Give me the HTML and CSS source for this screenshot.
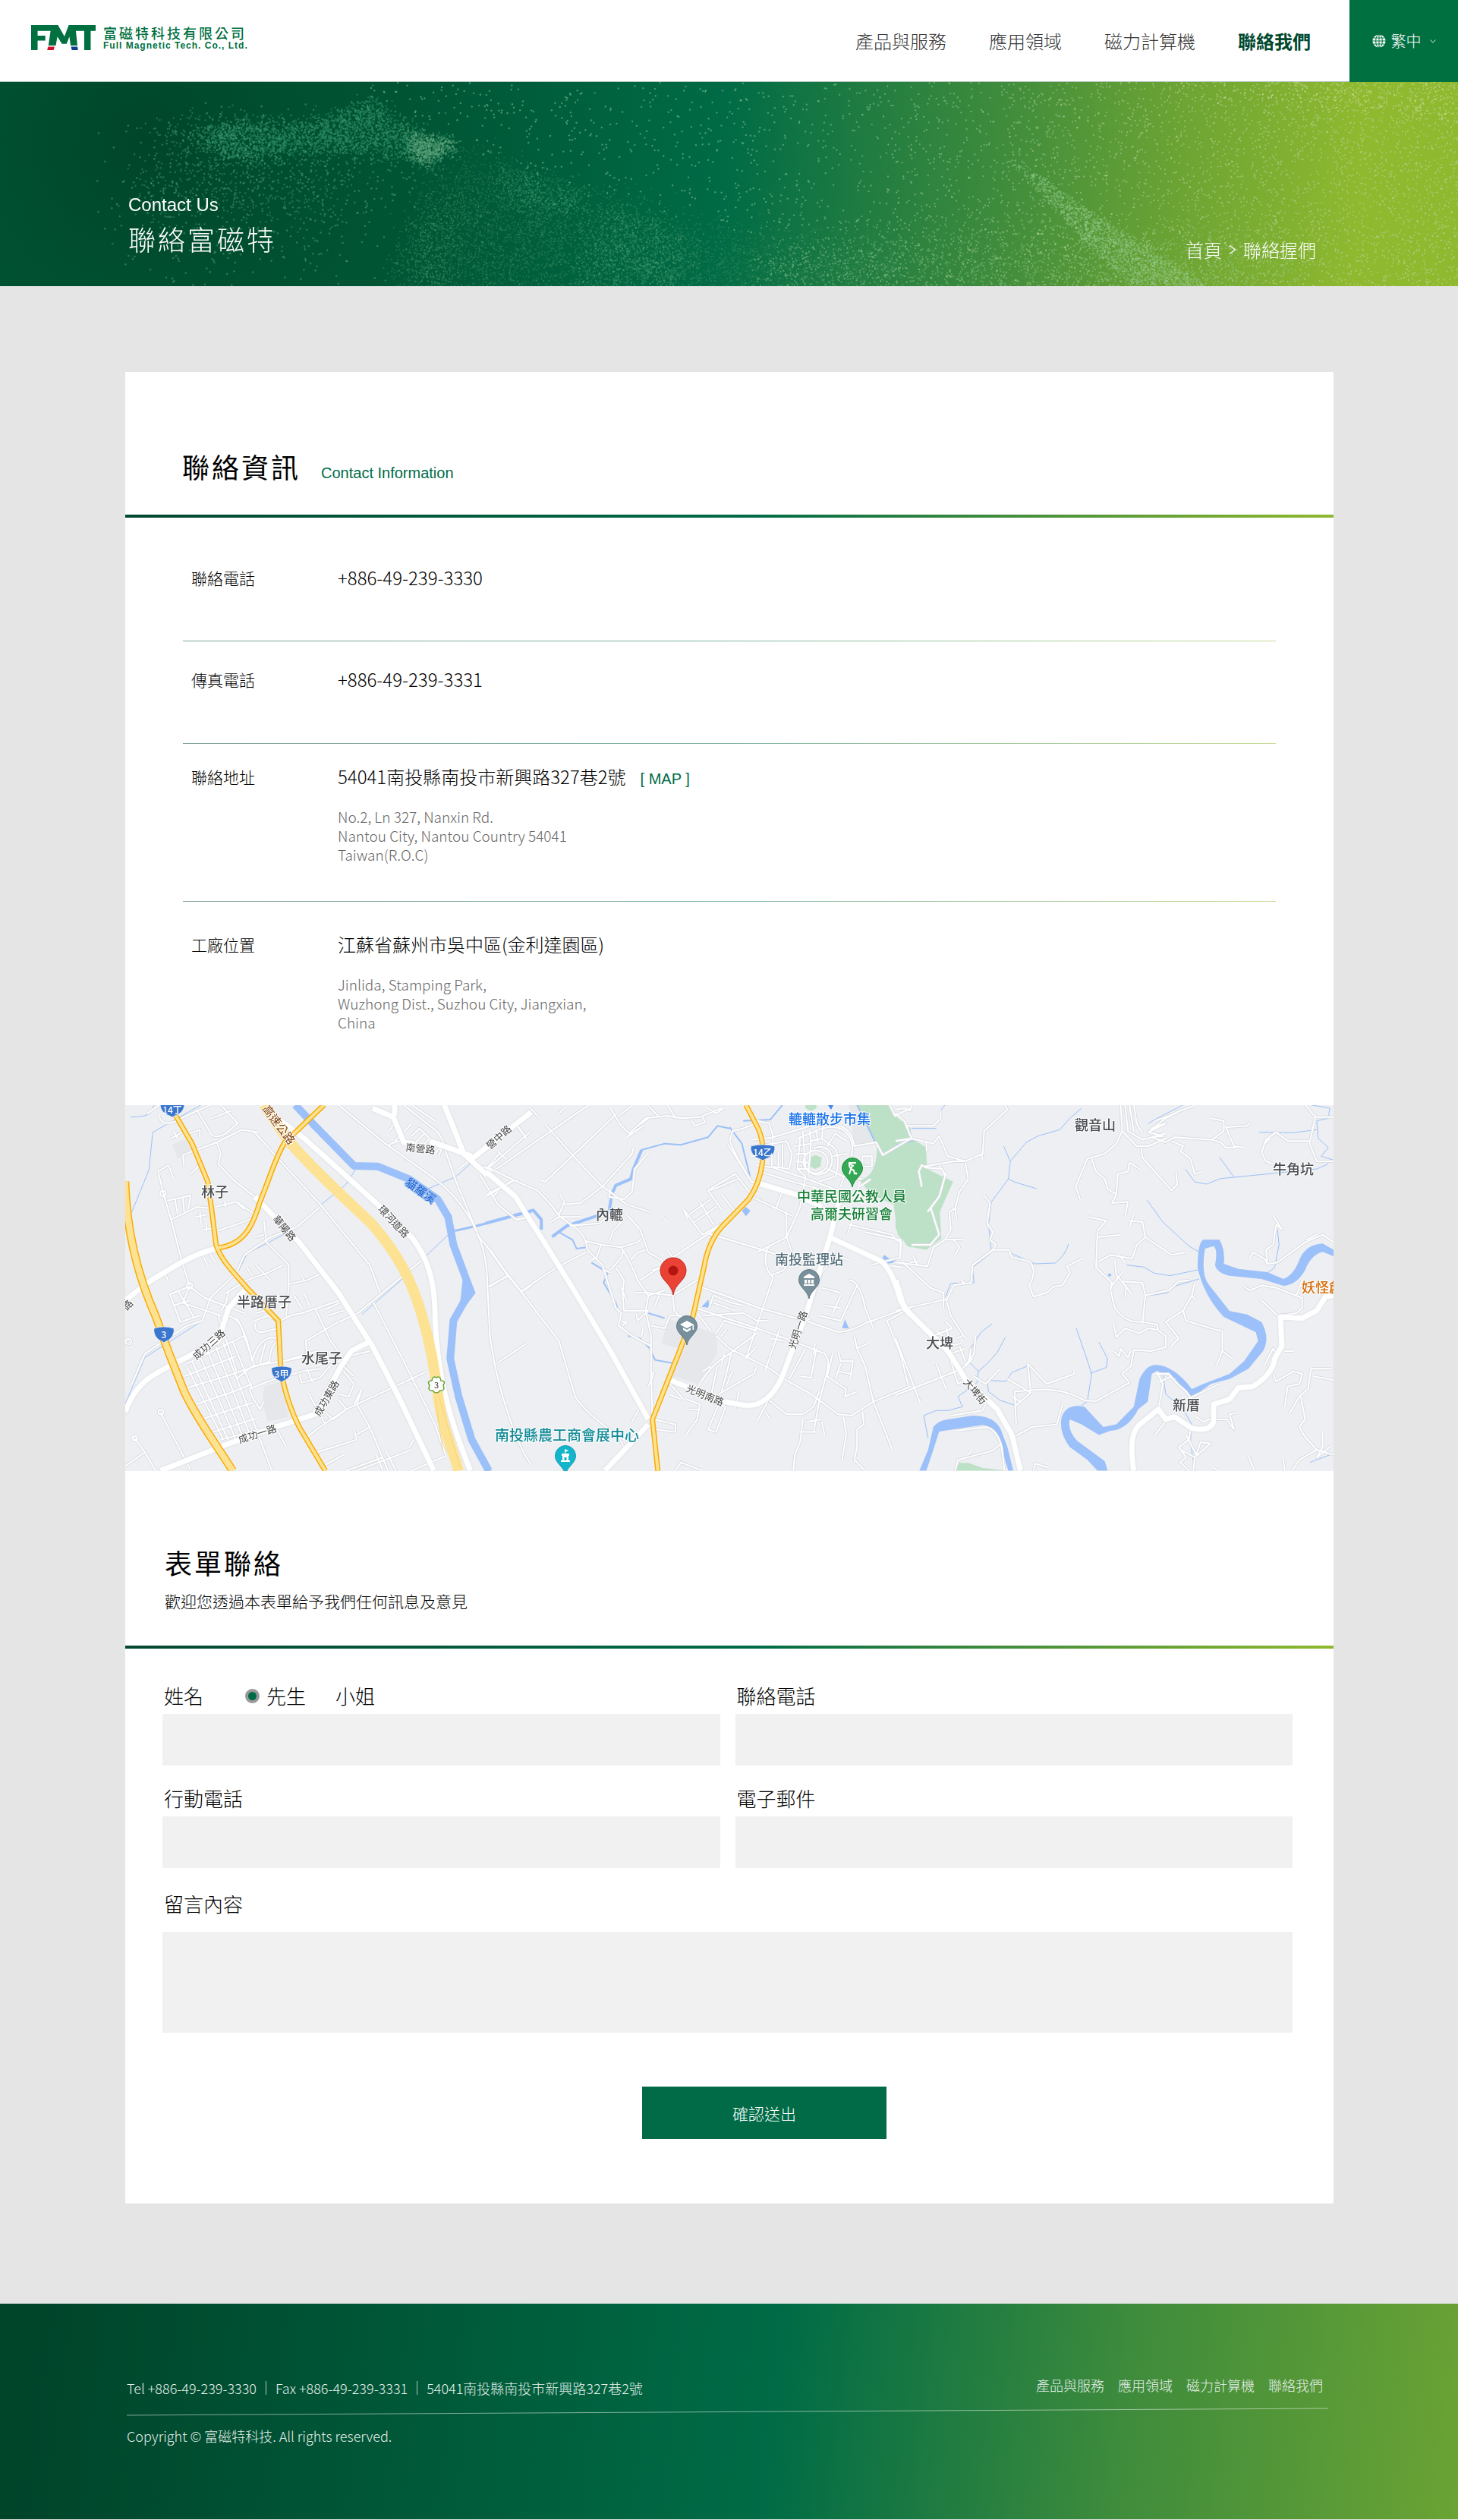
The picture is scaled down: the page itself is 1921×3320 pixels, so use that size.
FILE: index.html
```html
<!DOCTYPE html>
<html lang="zh-Hant">
<head>
<meta charset="utf-8">
<meta name="viewport" content="width=device-width, initial-scale=1">
<title>聯絡富磁特</title>
<link rel="stylesheet" href="styles.css">
</head>
<body>
<header class="header">
  <a class="logo" href="#">
    <svg class="logo__mark" viewBox="0 0 209 97" preserveAspectRatio="none" aria-hidden="true">
      <path fill="#007041" d="M0 0H87L108 44L122 0H209V23H193V97H172V23H145L150 79H128L124 45L115 73H100L85 45L80 79H56L63 23H21V41H46V60H21V97H0Z"/>
      <path fill="#d0112b" d="M55 84H76L73 97H52Z"/>
      <path fill="#0b3d91" d="M129 84H150L152 97H132Z"/>
    </svg>
    <span class="logo__text">
      <span class="logo__zh">富磁特科技有限公司</span>
      <span class="logo__en">Full Magnetic Tech. Co., Ltd.</span>
    </span>
  </a>
  <nav class="nav">
    <a class="nav__link" href="#">產品與服務</a>
    <a class="nav__link" href="#">應用領域</a>
    <a class="nav__link" href="#">磁力計算機</a>
    <a class="nav__link nav__link--active" href="#">聯絡我們</a>
  </nav>
  <button class="lang" type="button">
    <svg class="lang__globe" viewBox="0 0 18 18" aria-hidden="true">
      <circle cx="9" cy="9" r="8.6" fill="#fff"/>
      <g fill="none" stroke="#007041" stroke-width="1"><path d="M9 0V18M0 9H18M1.5 5H16.5M1.5 13H16.5"/><ellipse cx="9" cy="9" rx="4.3" ry="8.6"/></g>
    </svg>
    <span>繁中</span>
    <svg class="lang__arrow" viewBox="0 0 8 5" aria-hidden="true"><path d="M.5 .5L4 4L7.5 .5" fill="none" stroke="#fff" stroke-width=".9"/></svg>
  </button>
</header>

<section class="hero">
  <canvas class="hero__dust" aria-hidden="true"></canvas>
  <div class="hero__title">
    <p class="hero__en">Contact Us</p>
    <h1 class="hero__zh">聯絡富磁特</h1>
  </div>
  <nav class="crumbs"><a href="#">首頁</a><svg class="crumbs__sep" viewBox="0 0 10 14" aria-hidden="true"><path d="M1 1.5L8.5 7L1 12.5" fill="none" stroke="#fff" stroke-width="1.4"/></svg><span>聯絡握們</span></nav>
</section>

<main class="main">
<div class="card">
  <section>
    <div class="head head--info">
      <h2 class="head__title">聯絡資訊</h2>
      <p class="head__en">Contact Information</p>
    </div>
    <dl class="info">
      <div class="info__row info__row--phone"><dt>聯絡電話</dt><dd><p>+886-49-239-3330</p></dd></div>
      <div class="info__row info__row--fax"><dt>傳真電話</dt><dd><p>+886-49-239-3331</p></dd></div>
      <div class="info__row info__row--address"><dt>聯絡地址</dt><dd><p>54041南投縣南投市新興路327巷2號<a class="info__map" href="#map">[ MAP ]</a></p>
        <address>No.2, Ln 327, Nanxin Rd.<br>Nantou City, Nantou Country 54041<br>Taiwan(R.O.C)</address></dd></div>
      <div class="info__row info__row--factory"><dt>工廠位置</dt><dd><p>江蘇省蘇州市吳中區(金利達園區)</p>
        <address>Jinlida, Stamping Park,<br>Wuzhong Dist., Suzhou City, Jiangxian,<br>China</address></dd></div>
    </dl>
  </section>

  <svg class="map" id="map" viewBox="0 0 1592 482" preserveAspectRatio="xMidYMid slice" role="img" aria-label="地圖">
    <defs>
      <path id="pin" d="M0 25C-2 14-13.5 10-13.5 0A13.5 13.5 0 1 1 13.5 0C13.5 10 2 14 0 25Z"/>
      <path id="shield" d="M-13-9Q0-13 13-9C14-3 11 4 5 7Q2 8 0 10Q-2 8-5 7C-11 4-14-3-13-9Z" fill="#3a77cc" stroke="#fff" stroke-width=".6"/>
      <g id="west-minor">
          <path d="M830 47L1010 200L1200 340Q1310 430 1360 550Q1400 640 1400 760L1410 960Q1430 1120 1480 1270Q1520 1400 1568 1470"/>
          <path d="M505 150L600 260L760 440L950 680L990 790"/>
          <path d="M100 80L145 47M145 90Q150 130 200 115L290 70L345 165Q360 180 400 160L445 120L380 47M290 70L340 47M345 100L420 70"/>
          <path d="M240 290L235 245L365 195L460 145L520 155M365 195L380 240L370 280L430 345L510 410L540 430M265 320L300 285"/>
          <path d="M190 180L240 150M200 150L215 180M260 160L300 145L300 175"/>
          <path d="M160 395L190 500L230 660L260 760M140 310L180 285L200 340M140 310L160 395M190 500L290 450L335 455M175 425L265 405L255 460M205 420L215 480M235 415L240 470"/>
          <path d="M285 490L330 480M300 465L305 515M310 540L355 535M325 520V555M360 450L440 430L510 480M395 430L400 455M365 545L440 520L515 490M440 430L470 460"/>
          <path d="M545 505L555 590L640 680L640 760L630 880M545 560L510 570M640 755L710 740L760 715M690 725L700 745"/>
          <path d="M760 450L670 530L570 570L470 640L440 710L340 810L310 900L250 920L90 1030L40 1150"/>
          <path d="M310 640L330 680M335 630L360 670M165 710L180 745M400 790L480 740L560 710L620 680M480 690L500 720M515 680L570 740"/>
          <path d="M185 795L260 765L320 810L470 870M185 795L225 905L300 880M215 780L280 890M260 765L235 830L380 880M200 840L260 820M410 780L400 830L380 860"/>
          <path d="M605 905Q630 880 690 870L835 820M660 800L690 850M700 795L720 840M780 855L835 830M740 850L800 980L870 1080M790 880L850 860M510 900L560 880L595 900M510 910Q510 960 560 940L600 930M515 870L590 850"/>
          <path d="M905 870L820 910L705 980L710 1040L620 1060L500 1080L440 1130M490 1170L560 1140L690 1100L760 1090M620 1060L750 1020"/>
          <path d="M680 1110L690 1145L760 1125L800 1075L870 1040L950 1020M710 1090L730 1140M740 1080L800 1060M830 1060L890 1120M850 1100L890 1150L870 1200L830 1190"/>
          <path d="M250 1165L400 1120L570 1060M285 1230L430 1180L500 1150M320 1285L500 1225M350 1340L520 1285M380 1370L530 1330M240 1120L440 1040M250 1070L470 960"/>
          <path d="M250 1080L390 1370M270 1060L410 1375M300 1040L440 1375M330 1020L470 1375M360 1000L495 1360M390 990L520 1340L575 1493M425 980L500 1170M370 880L440 1100M410 880Q460 900 470 960L510 1080M440 890Q480 950 500 1060"/>
          <path d="M500 1060Q530 950 600 970M530 1070L550 990M565 1070Q570 990 600 980M490 1170L500 1200L530 1250L545 1220"/>
          <path d="M715 1355L760 1320L860 1250L1170 1100M715 1185L780 1310M740 1230L810 1290L860 1250L830 1210M920 1170L900 1230L950 1320L1020 1493M920 1170L890 1230M750 1420L900 1370L890 1330M900 1350L950 1320M780 1470L850 1430"/>
          <path d="M965 830L1080 1060L1200 1310L1240 1430M900 1493L1110 1410M860 1493L1000 1440M975 1430L1000 1493M1010 1410L1050 1493M1100 1400L1120 1370M1110 1493L1240 1435M590 1320L630 1400"/>
          <path d="M905 870L1150 660M1440 1065L1550 990M1410 765L1480 720L1530 785L1568 760M1360 560L1410 620L1480 720M150 1265L250 1460L265 1493M50 1365L90 1420L130 1493M14 1475L90 1420"/>
          <path d="M1020 210Q1060 170 1140 210M1025 150L1050 110M1040 200L1070 160M1085 150L1110 120M1110 170L1140 140L1180 180L1150 210M1120 200L1160 160M1080 47L1180 130Q1230 160 1240 230L1280 350L1360 550M1110 47L1200 110M1200 240L1230 200L1215 250"/>
          <path d="M1340 260L1290 300M1400 300L1568 150M1420 310L1380 290M1370 320L1440 440L1510 500L1568 490M1400 400L1500 345M1420 410L1440 390M1440 230L1470 260M1510 120L1550 180"/>
          <circle cx="159" cy="397" r="11"/><circle cx="260" cy="762" r="11"/><circle cx="151" cy="1261" r="10"/><circle cx="51" cy="1365" r="9"/><circle cx="27" cy="982" r="11"/>
      </g>
      <g id="mid-minor">
        <path d="M0 600L80 720L130 785L270 980L330 1200Q370 1270 510 1370M10 765L80 725M130 785L190 740L260 690L370 630"/>
        <path d="M40 300L380 47M10 290L50 240M105 345L0 410M200 345L220 350L480 85M220 125L320 245L420 360L520 440L605 470M115 130L150 180M165 60L195 95"/>
        <path d="M0 290L105 345L190 385L240 440L270 485L340 540Q370 570 375 620L430 680L480 850L500 870L490 920L540 960L610 1000"/>
        <path d="M275 405L290 430L270 480M290 440L350 435L430 370M460 380L455 410L510 420L540 390M240 510L270 490L350 490M310 525L420 515L470 470M520 480L570 540L600 630L650 660L690 790"/>
        <path d="M455 590L470 545L500 510M370 585L430 600L500 610Q540 680 560 740L600 800L590 860L610 960V1100L615 1290M500 610L560 590L575 575M535 660L560 630L590 620M425 600L410 650L390 660M460 700L500 650L510 620"/>
        <path d="M480 690L510 740L505 790L510 860L600 860M570 740L640 690M550 790L600 790L690 800M600 800L660 780M625 840L640 800M520 820L500 770M440 700L460 710M610 920L660 930L680 880L720 880L760 900M555 870L560 900L600 860M500 900L520 910M505 920L520 900M575 960L580 930"/>
        <path d="M690 800L780 740M670 620L690 650L900 500M690 800L695 860L740 910M615 700L660 690M540 390L550 300L600 235M545 215L540 240L430 370"/>
        <path d="M460 60L500 130L530 160L590 100L670 90L720 100L790 95L870 60M490 90L540 50M520 175L580 130M560 130L600 100M600 50L640 95M760 110L770 130L810 115L800 95M670 47L700 100M820 60L850 80L880 60M270 80L290 60"/>
        <path d="M730 460L800 560L900 500L980 400L920 320L820 385L870 460M750 480L830 420M770 510L850 450M790 430L840 520M870 400L920 470M830 385L930 340M730 460L745 500"/>
        <path d="M895 205L980 350L1000 355M910 150L900 190L930 260L970 330M910 150Q1000 130 1000 105M980 185L1060 175L1200 130M970 215L1060 200M980 250L1010 250M1000 110L1045 120L1060 170L1055 290M1060 200L1110 190L1130 240L1120 300L1060 290M1000 285L1060 295L1200 345L1310 390M1010 310L1130 350L1300 400M1080 290V230M1095 300V200"/>
        <path d="M1160 175L1150 300L1180 330L1160 450L1110 570L1130 630M1140 210L1200 200M1145 240L1190 240M1145 270L1190 275M1150 300L1195 300M1195 150L1200 200L1190 320M1200 190L1240 180L1290 220Q1310 270 1290 330L1230 350M1190 300Q1210 340 1260 310Q1290 280 1270 230Q1240 200 1210 220M1240 180L1245 130M1260 210L1290 160M1280 250L1330 240M1260 300L1320 330M1150 180L1240 140Q1310 120 1340 170Q1370 220 1330 300L1310 370M1170 150L1180 300M1220 150L1225 190M1290 160L1330 190M1300 130Q1350 140 1360 210L1440 195L1465 245L1568 180M1390 250H1425V290H1390ZM1320 330L1390 340"/>
        <circle cx="1217" cy="272" r="45"/>
        <path d="M820 555L990 610L1050 630L1200 690M980 410L1130 485M1000 630L1110 570L1110 470M1050 600Q1020 640 1040 700L1060 730L1000 920L960 1050M1055 720L1100 700L1130 640M790 765L1010 850L1180 900L1300 945Q1340 945 1400 910L1568 845M775 850L1000 930L1120 975L1250 1030Q1270 1050 1260 1100L1230 1220L1210 1340"/>
        <path d="M825 850L840 800L910 830L950 840M840 830L920 860M800 880L950 870L1000 900L1040 900M850 950L880 900L1000 940M870 960L890 930M830 940L780 870M850 960L900 1010L1050 1090L1100 1130L1200 1190L1300 1270L1350 1275L1430 1220L1568 1160"/>
        <path d="M1000 950L900 1030Q820 1080 780 1170M960 1050L1000 1000M870 1180L890 1100L905 1030M870 1070L880 1030M860 1190L990 1110L1000 1080M800 1100L830 1080M1085 930L1030 1100M1050 970L1100 980M1140 990L1090 1110M1160 1120L1200 1125L1220 1010M1120 1130L1180 1010M1215 990L1210 1030"/>
        <path d="M1280 1030L1260 1120L1330 1170L1325 1200L1370 1180M1300 1020L1310 1060L1355 1060L1345 1130M1310 1070L1290 1130M1300 1100L1350 1110M1360 960L1370 1010L1410 990M1370 1010L1400 1080L1430 1220L1500 1410M1480 900L1530 1030L1560 1160M1480 900L1568 850M1180 900L1200 890M1340 520L1500 560L1510 570M1350 510L1335 560M1420 680L1530 650V580L1400 550"/>
        <path d="M1040 1210L1110 1270L1170 1270L1210 1240L1230 1180M1000 1300L1040 1220M1030 1260L1050 1290M1170 1290L1160 1380L1140 1430L1135 1493M1160 1340L1220 1340M1180 1300L1240 1290M1240 1300L1250 1350M1320 1280L1330 1350L1315 1450M1390 1260L1395 1310L1370 1330L1370 1400L1360 1450L1400 1493"/>
        <path d="M680 1150L730 1210M675 1190L720 1210M740 1210L790 1230L780 1290L740 1350M750 1250L790 1250M855 1080L830 1200L860 1230L820 1330L850 1340L885 1240L830 1220M910 1100L890 1150M920 1250L935 1180M620 1290L700 1310V1340L630 1330M565 1250L540 1300M610 1100L620 1110L600 1160M475 1330L510 1400M700 1493L720 1460L800 1493M655 490L660 500"/>
        <path d="M1200 830L1240 710L1290 640L1340 660M1340 740Q1380 740 1400 850L1430 930M1240 770L1310 790M1250 840L1310 850M1230 880L1310 900L1370 760M1280 870L1310 800"/>
        <path d="M1490 47L1510 90L1568 60M1380 350L1370 400M1420 340L1380 370M1540 690L1480 680M1070 460L1090 400L1120 380"/>
      </g>
      <g id="east-minor">
        <path d="M0 65L30 60L50 70L55 47M40 130L130 130L155 100V70M0 190L55 180L130 200L150 170L180 250L240 270L300 240L305 150L385 65L375 47M100 290L200 270L240 270M55 180L30 110L0 80M105 190L108 230"/>
        <path d="M90 370L80 310L90 285L105 295L160 300L170 330L150 410L110 470M120 450L150 560L120 600L55 600M150 290L175 325M240 275L250 340L220 390L205 455L185 470L190 540L170 580L130 610L110 685L0 670M205 455L210 500M175 580L230 578M200 580L220 610L205 640M60 645L75 680M0 580L20 590L15 650M50 670L75 665M295 240L300 265"/>
        <path d="M305 405L325 435L315 515L335 550L325 580L345 600L335 620L265 680L260 750L200 760L175 820L190 880L240 970M335 620L390 620L400 650L460 665Q490 700 460 760L475 805L520 790L545 765L575 760L600 710L590 685L640 655M25 670L120 770L165 790V850M0 860L175 815M225 740L240 755"/>
        <path d="M635 420L620 370L660 260L720 240L760 200L780 150L775 47M675 260L690 310L720 340L730 380L760 400L765 320L800 310L805 275L840 300M760 400L745 435L800 430L790 490M805 530L820 480M790 47L800 150L850 185L930 160M805 47L820 150M820 47L830 120L850 160M780 150L830 210L870 210L930 180M870 155L930 100L970 75L1030 50M880 140L930 120L870 155L920 170L880 175L930 195L960 175L1090 185L1130 150V110L1085 100M895 110L965 80M1135 130L1165 210L1200 215M1140 135L1210 130L1220 115M1090 185L1120 195L1135 215H1170"/>
        <path d="M845 215L850 255L950 385L970 360L965 310M950 190L990 210L980 230L1015 260L1030 320L1055 310M1410 47L1445 95L1508 95M1445 95L1425 200L1450 270L1508 270M1430 190L1350 190L1310 155L1275 185L1260 235L1275 270L1300 280M1290 180L1270 200"/>
        <path d="M665 490L725 505L695 545L690 690L745 750L740 780L755 850Q790 910 850 905L900 915L905 940L930 960L930 1005L880 1020L820 1015L810 1080L780 1110L805 1145L690 1218L650 1215Q580 1170 500 1172L410 1180L415 1310M695 570L775 560M700 665L740 640L815 655L830 600L860 570L850 510L805 505M860 570L950 640L1000 630M770 640L790 670M755 665L760 720L780 745L850 750L860 800L850 910M780 745L810 790M745 760L780 710M790 810L795 760M860 800L940 780L975 745L1010 740M1030 750L1020 800L990 860L930 905L975 970L950 1000M1020 800L1035 820M990 860L1000 900L1100 935L1125 940L1125 1020L1160 1050M1125 1020L1105 1078"/>
        <path d="M750 910L760 965L790 930L840 950L870 930L900 935M750 1020L770 1040L775 1010L800 1045L810 1020M1220 650L1230 630L1270 655L1280 675L1315 670L1410 590L1470 560L1508 590M1300 485L1330 540L1310 520L1300 600L1275 620L1280 670M1415 580L1450 560M1200 765L1220 780L1260 760L1310 770L1400 810V850L1380 870L1320 880M1255 815L1315 880M1380 800L1400 740"/>
        <path d="M1320 1045L1300 1010L1270 1075M1340 1020L1370 1020M1300 1110L1310 1140L1370 1100L1400 1110L1390 1150L1350 1160L1340 1240M1430 1090H1500M1440 1120L1508 1135M1430 1090L1420 1170L1390 1200L1355 1270M1395 1200L1410 1290L1390 1320L1410 1360L1450 1410L1390 1450L1365 1493M1450 1410L1508 1430M1470 1340V1400L1450 1440L1500 1395M1215 1435L1235 1493M1335 1455L1340 1493"/>
        <path d="M895 1110L940 1110L970 1150L1000 1180L1015 1205L1115 1150M900 1105L920 1150L905 1250M910 1140L950 1120M935 1290L895 1350M1100 1280L1060 1300L1035 1280M1100 1290L1140 1290L1165 1330L1150 1270L1170 1265M1015 1330L1010 1370L975 1400L1000 1440L980 1460L1010 1493M1000 1350L1035 1430L1050 1380L1085 1385L1030 1440L980 1410M1095 1480L1110 1493M1030 1440L1025 1493"/>
        <path d="M0 1195L230 1090L270 1030L275 960M130 960L195 930L170 900M140 940L200 1000M175 930L190 1000L225 990M190 1030L240 1010M180 1010L190 1060L215 1150L240 1135M220 1000L240 1060M240 1080L265 1050M0 970L85 1225M140 1070L175 1175M260 1010L250 1070M210 970L230 960M455 1070L465 1180M455 1070L520 1150L615 1110V1095M385 1130L465 1185L415 1235M400 1200L430 1220M410 1358L470 1320L555 1310L575 1230M190 1275L300 1255L310 1230M210 1335L310 1320Q350 1330 365 1400L375 1493M205 1493L215 1450L330 1415L360 1390M250 1430L260 1415M475 1493L480 1465L525 1480M360 1090L310 1150L270 1120"/>
      </g>
      <g id="minor">
        <use href="#west-minor" transform="matrix(.3444 0 0 .3333 -5 -16)"/>
        <use href="#mid-minor" transform="matrix(.3571 0 0 .3333 475 -16)"/>
        <use href="#east-minor" transform="matrix(.3827 0 0 .3333 1015 -16)"/>
      </g>
    </defs>
    <rect width="1592" height="482" fill="#edeff2"/>
    <g transform="matrix(.3444 0 0 .3333 -5 -16)" fill="#e5e7eb">
      <path d="M195 205L245 180L270 225L215 260ZM545 1160L610 1140L640 1280L560 1300L540 1230Z"/>
      <g class="map__stream"><path d="M35 95Q90 95 110 80L125 47M14 495L40 470L105 305L120 155L305 47M14 1230L90 1045L310 900L340 815L450 700L480 635L620 560M760 445L860 360L900 295M920 875L1070 740L1250 560M1170 380L1280 330L1340 275"/></g>
      <path class="map__river" stroke-width="10" d="M665 47L740 130L890 288L980 290L1100 340L1210 420L1250 490L1270 600L1335 780L1270 900L1258 1050L1290 1200L1340 1370L1405 1493"/>
      <path class="map__river" d="M1275 545L1360 525L1568 468" stroke-width="3"/>
      <path fill="#9cc0f9" d="M1310 690L1355 790L1290 880L1300 790Z"/>
    </g>
    <g transform="matrix(.3571 0 0 .3333 475 -16)">
      <path fill="#e5e7eb" d="M670 890L850 950L855 1030L780 1150L690 1120L710 1010L650 990ZM1340 47H1370L1435 195L1360 205Z"/>
      <path fill="#bde1c6" d="M1370 47H1485L1510 90L1568 140V612L1520 560L1505 440L1420 400L1380 345C1430 330 1445 280 1443 200ZM1180 47H1220V60L1200 72L1180 60ZM1197 255L1217 245L1240 255L1235 290L1215 300L1197 290Z"/>
      <path class="map__river" stroke-width="4" d="M0 515L175 463L205 500L205 540M245 568L300 525L370 500L455 470L465 400L480 365L535 340L545 300L575 225"/>
      <g class="map__stream"><path stroke-width="2" d="M575 225L660 200L720 205L820 175L855 130L900 140M900 135L945 200L975 330M950 110L1050 105L1095 47M1370 47L1435 190L1465 245L1500 220L1568 190M270 550L320 580L335 615L370 610M390 670L450 710L435 750L480 830L490 865M600 870L660 890M525 960L570 970L605 1010L625 1055L690 1068"/></g>
      <path fill="#9cc0f9" d="M945 465L960 450L977 466L960 487ZM796 845L822 817L824 848ZM1460 660L1470 640L1490 655L1515 660L1500 672L1475 675ZM1315 930L1325 895L1340 930ZM0 1440L22 1493H0Z"/>
    </g>
    <g transform="matrix(.3827 0 0 .3333 1015 -16)">
      <path fill="#bde1c6" d="M0 105L50 175L105 215L108 300L198 350L152 470L158 575L105 620L40 605L0 535ZM205 1493L215 1462H250L300 1482L380 1493Z"/>
      <g class="map__stream"><path d="M170 47L155 70M55 140L140 140M0 205L60 190L50 150M640 60L600 100L565 145L490 170L450 195L395 270L372 210M395 270L388 340L330 430L320 520L330 630L265 690L270 750L190 752L172 805M388 340L410 352L485 378M45 852L175 815M400 635L480 675L550 672Q585 640 595 597M865 422L920 510L1010 605L1045 628M795 680L855 688L890 712L945 722L1045 698M862 803L935 790L965 762L1045 735M997 300L1030 352L1070 360L1120 338L1165 333L1280 320L1450 300L1490 280M1115 253L1165 333M1252 155L1370 157L1450 145M1430 47L1495 60L1490 100L1450 110L1455 180L1490 215L1465 250L1508 265M870 120L900 100L965 62L990 47M1315 540L1320 600L1305 690L1280 712M622 930L655 1040L675 1110L660 1220L640 1235M670 1108L725 1085L730 1050L700 985M332 912L295 945L260 1005L255 1065L285 1100M378 965L350 1025L315 1070L285 1100L280 1145L215 1200L230 1240L180 1255L140 1255L97 1275L112 1365M452 1080L400 1105L380 1140L315 1135L320 1180L360 1215L412 1235M920 1110L930 1190L990 1250L1020 1310L1015 1380L1030 1493M1427 1460L1500 1428"/></g>
      <path fill="#9cc0f9" d="M82 1493L112 1410L130 1320Q145 1295 180 1290L265 1275Q340 1275 362 1330L385 1400L405 1493H388L360 1390Q345 1325 300 1312L150 1338L130 1410L106 1493ZM695 1493L660 1450L600 1400Q560 1340 572 1280Q590 1225 650 1240L715 1320L760 1310L820 1240L840 1130Q865 1070 900 1075Q960 1080 1020 1170L1060 1150L1150 1110L1200 1060L1248 980L1240 945L1130 885Q1060 800 1040 690Q1040 590 1060 580L1115 580Q1135 620 1130 675L1180 695L1280 708L1335 735Q1370 720 1390 660Q1410 600 1470 595L1508 620V645L1470 628Q1430 640 1410 700Q1380 760 1335 762L1260 735L1150 722Q1105 710 1100 680Q1110 620 1095 605L1065 615Q1050 720 1080 760L1150 862L1210 875L1260 905Q1290 970 1265 1020L1215 1090L1150 1130L1085 1150L1025 1200L1005 1190L960 1125L900 1098L882 1110L868 1220L835 1250Q800 1330 740 1335L700 1352L640 1310L600 1290Q590 1330 625 1375L720 1455L730 1493Z"/>
      <circle cx="737" cy="719" r="6" fill="#9cc0f9"/>
    </g>
    <use class="map__case" href="#minor"/>
    <use class="map__road" href="#minor"/>
    <g class="map__main">
      <g transform="matrix(.3444 0 0 .3333 -5 -16)">
        <path d="M590 95L700 180L980 440L1110 570C1180 660 1200 760 1200 900C1210 1100 1240 1250 1335 1493M510 410L680 590L830 790L960 1000L1060 1200L1195 1493M14 820L100 750C180 700 260 640 362 615M14 1260C60 1130 130 1110 240 1050L370 980L410 850L470 780M150 1493L400 1390L590 1320L740 1270L840 1080L880 1020L945 985M1235 47L1310 240L1400 325M1568 75L1340 260M1180 190L1340 250M960 60L1040 95L1080 195L1120 200M1045 90V47"/>
      </g>
      <g transform="matrix(.3571 0 0 .3333 475 -16)">
        <path d="M0 310L110 410L150 480L210 580L320 770L460 1020L600 1290M440 1493L600 1310M1000 355L1140 400L1240 450M1310 400L1270 570L1180 880L1090 1130Q1040 1240 960 1235L880 1220L670 1130M1270 570L1460 665Q1500 700 1530 820L1568 880"/>
      </g>
      <g transform="matrix(.3827 0 0 .3333 1015 -16)">
        <path d="M0 740L30 850L180 1020L240 1130L350 1250L400 1350L430 1493M820 1493Q800 1350 840 1310L905 1250L930 1290L960 1280L1020 1325Q1080 1340 1095 1300V1230L1150 1210L1180 1165L1230 1160Q1300 1110 1305 1050L1330 1000L1325 885L1400 890L1450 860L1480 805L1508 800"/>
      </g>
    </g>
    <g fill="none">
      <g transform="matrix(.3444 0 0 .3333 -5 -16)">
        <path class="map__highway" d="M545 47L640 190C740 310 850 410 960 520C1060 640 1110 740 1150 880C1190 1020 1200 1120 1215 1220C1230 1330 1265 1400 1290 1493"/>
        <path stroke="#f9d57a" d="M1208 1180L1300 1493M1200 1200L1230 1420"/>
        <path class="map__trunk-case map__trunk-case--wide" d="M14 350C20 560 70 740 130 880C170 1000 200 1080 240 1180C290 1290 370 1400 425 1493"/>
        <path class="map__trunk map__trunk--wide" d="M14 350C20 560 70 740 130 880C170 1000 200 1080 240 1180C290 1290 370 1400 425 1493"/>
        <path class="map__trunk-case" d="M208 90L270 200L330 350L345 460L362 600C380 660 430 710 480 770L600 900L610 1100C625 1180 650 1260 680 1320L780 1493M775 47L625 195C590 250 570 330 530 430C510 500 480 600 368 612"/>
        <path class="map__trunk" d="M208 90L270 200L330 350L345 460L362 600C380 660 430 710 480 770L600 900L610 1100C625 1180 650 1260 680 1320L780 1493M775 47L625 195C590 250 570 330 530 430C510 500 480 600 368 612"/>
      </g>
      <g transform="matrix(.3571 0 0 .3333 475 -16)">
        <path class="map__trunk-case" d="M960 47L1005 140Q1030 200 1020 280Q1010 360 970 420L870 530Q820 590 805 690L765 880L715 1020L615 1290L635 1493"/>
        <path class="map__trunk" d="M960 47L1005 140Q1030 200 1020 280Q1010 360 970 420L870 530Q820 590 805 690L765 880L715 1020L615 1290L635 1493"/>
      </g>
    </g>

    <use href="#shield" x="51" y="303"/><use href="#shield" x="206" y="355"/><use href="#shield" transform="translate(62 6) scale(1.2 1)"/><use href="#shield" transform="translate(840 63) scale(1.2 1)"/>
    <g class="map__num"><text x="51" y="307">3</text><text x="206" y="359">3甲</text><text x="62" y="11">14丁</text><text x="840" y="67">14乙</text></g>
    <path d="M410 359Q415 356 416 363Q423 363 419 369Q422 377 415 376Q410 382 405 376Q398 377 401 369Q397 363 404 363Q405 356 410 359Z" fill="#fff" stroke="#6ba43a" stroke-width="1.5"/>
    <text class="map__exit" x="410" y="373">3</text>

    <g class="map__place">
      <text x="100" y="121">林子</text><text x="147" y="266">半路厝子</text><text x="232" y="340">水尾子</text><text x="620" y="151">內轆</text>
      <text x="1251" y="33">觀音山</text><text x="1512" y="91">牛角坑</text><text x="1055" y="320">大埤</text><text x="1380" y="402">新厝</text>
      <text class="map__place--wide map__place--teal" x="487" y="442">南投縣農工商會展中心</text>
      <text class="map__place--blue" x="874" y="25">轆轆散步市集</text>
      <text class="map__place--green" x="885" y="127">中華民國公教人員</text><text class="map__place--green" x="903" y="150">高爾夫研習會</text>
      <text class="map__place--slate" x="856" y="210">南投監理站</text>
      <text class="map__place--orange" x="1550" y="247">妖怪創</text>
    </g>
    <g class="map__street">
      <text class="map__street--brown" transform="translate(202 26) rotate(53)" y="5">高速公路</text>
      <text transform="translate(389 57) rotate(6)" y="5">南營路</text>
      <text transform="translate(492 42) rotate(-42)" y="5">營中路</text>
      <text class="map__street--water" transform="translate(389 113) rotate(36)" y="5">貓羅溪</text>
      <text transform="translate(354 153) rotate(47)" y="5">環河道路</text>
      <text transform="translate(210 162) rotate(50)" y="5">華陽路</text>
      <text transform="translate(110 315) rotate(-42)" y="5">成功三路</text>
      <text transform="translate(265 386) rotate(-60)" y="5">成功東路</text>
      <text transform="translate(174 433) rotate(-18)" y="5">成功一路</text>
      <text transform="translate(3 263) rotate(-50)" y="5">路</text>
      <text transform="translate(886 296) rotate(-72)" y="5">光明一路</text>
      <text transform="translate(764 382) rotate(22)" y="5">光明南路</text>
      <text transform="translate(1120 377) rotate(50)" y="5">大埤街</text>
    </g>

    <path fill="#4285f4" d="M926 0H933L930 6Z"/>
    <g transform="translate(958 83)"><use href="#pin" fill="#34a853" stroke="#1e8e3e"/><path d="M-5-7H5M-4-7V-3L-2 1L-4 8M-2 1L2 3L3 8M-3-5L2-3M-2 1L0-3" fill="none" stroke="#fff" stroke-width="2"/><circle cx="5" cy="7" r="1.5" fill="#fff"/></g>
    <g transform="translate(901 230)"><use href="#pin" fill="#78909c" stroke="#5f7783"/><path fill="#fff" d="M-7-4L0-8L7-4V-2H-7ZM-6 0H-3V5H-6ZM-1.5 0H1.5V5H-1.5ZM3 0H6V5H3ZM-7 6H7V8H-7Z"/></g>
    <g transform="translate(740 291)"><use href="#pin" fill="#78909c" stroke="#5f7783"/><path fill="#fff" d="M-9-2L0-7L9-2V5H7.5V-1L0 3ZM-5 2L0 5L5 2V5L0 8L-5 5Z"/></g>
    <g transform="translate(580 462)"><use href="#pin" fill="#12b5cb" stroke="#129eaf"/><path fill="#fff" d="M-1-9L4-7L0-5V-3H5V0H4V6H6V8H-6V6H-4V0H-5V-3H-1Z"/><rect x="-1.5" y="2" width="3" height="4" fill="#12b5cb"/></g>
    <path d="M722 250C720 235 705 231 705 218A17 17 0 1 1 739 218C739 231 724 235 722 250Z" fill="#ea4335" stroke="#c5221f"/>
    <circle cx="722" cy="218" r="6.5" fill="#b31412"/>
  </svg>

  <form class="form">
    <div class="head head--form">
      <h2 class="head__title">表單聯絡</h2>
      <p class="head__note">歡迎您透過本表單給予我們任何訊息及意見</p>
    </div>
    <div class="form__body">
      <div class="form__grid">
        <div class="field">
          <div class="field__line">
            <label class="field__label" for="name">姓名</label>
            <label class="radio"><input type="radio" name="title" value="mr" checked>先生</label>
            <label class="radio"><input type="radio" name="title" value="ms">小姐</label>
          </div>
          <input class="field__input" id="name" type="text">
        </div>
        <div class="field">
          <label class="field__label" for="tel">聯絡電話</label>
          <input class="field__input" id="tel" type="tel">
        </div>
        <div class="field">
          <label class="field__label" for="mobile">行動電話</label>
          <input class="field__input" id="mobile" type="tel">
        </div>
        <div class="field">
          <label class="field__label" for="email">電子郵件</label>
          <input class="field__input" id="email" type="email">
        </div>
      </div>
      <div class="field field--message">
        <label class="field__label" for="message">留言內容</label>
        <textarea class="field__input field__input--area" id="message"></textarea>
      </div>
      <div class="form__actions"><button class="submit" type="submit">確認送出</button></div>
    </div>
  </form>
</div>
</main>

<footer class="footer">
  <div class="footer__top">
    <p class="footer__contact"><span>Tel +886-49-239-3330</span><span>Fax +886-49-239-3331</span><span>54041南投縣南投市新興路327巷2號</span></p>
    <nav class="footer__nav"><a href="#">產品與服務</a><a href="#">應用領域</a><a href="#">磁力計算機</a><a href="#">聯絡我們</a></nav>
  </div>
  <svg class="footer__rule" viewBox="0 0 1583 11" preserveAspectRatio="none" aria-hidden="true"><path d="M0 10L1583 1" stroke="#fff" stroke-opacity=".5" vector-effect="non-scaling-stroke"/></svg>
  <p class="footer__copy">Copyright © 富磁特科技. All rights reserved.</p>
</footer>
<script src="main.js"></script>
</body>
</html>
```
FILE: styles.css
```css
* { box-sizing: border-box; }
body {
  margin: 0;
  background: #e5e5e5;
  color: #000;
  font-family: "Noto Sans CJK TC", sans-serif;
  font-weight: 300;
  font-size: 24px;
  line-height: 36px;
}
h1, h2, p, dl, dd { margin: 0; }
a { color: inherit; text-decoration: none; }

/* Header */
.header {
  display: flex;
  align-items: center;
  height: 108px;
  background: #fff;
  border-bottom: 1px solid #b5c6bd;
}
.logo { display: flex; align-items: center; gap: 10px; margin: 0 auto 8px 41px; color: #007041; }
.logo__mark { width: 85px; height: 33px; }
.logo__text { display: flex; flex-direction: column; }
.logo__zh { font-size: 18px; line-height: 20px; font-weight: 500; letter-spacing: 3px; }
.logo__en { font: 700 12px/14px "Liberation Sans", sans-serif; letter-spacing: 1px; }
.nav { display: flex; gap: 56px; color: #333; }
.nav__link--active { color: #00482e; font-weight: 700; }
.lang {
  display: flex;
  align-items: center;
  justify-content: center;
  gap: 7px;
  align-self: stretch;
  width: 143px;
  margin: 0 0 -1px 51px;
  padding: 0;
  border: 0;
  background: #007041;
  color: #fff;
  font: inherit;
  font-size: 20px;
}
.lang__globe { flex: none; width: 18px; height: 18px; }
.lang__arrow { flex: none; width: 8px; height: 5px; margin-left: 4px; }

/* Hero */
.hero {
  position: relative;
  display: flex;
  justify-content: space-between;
  align-items: flex-end;
  min-height: 269px;
  padding: 0 187px 30px 169px;
  background: radial-gradient(circle farthest-corner at 10% 30%, #00452a 0, #004e30 10%, #005434 20%, #006b46 44%, #3f8c3c 65%, #6ba334 78%, #8fb92f 92%);
  color: #fff;
}
.hero__dust { position: absolute; inset: 0; width: 100%; height: 100%; }
.hero__title, .crumbs { position: relative; }
.hero__title { padding-bottom: 9px; }
.hero__en { margin-bottom: 5px; font-family: "Liberation Sans", sans-serif; line-height: 30px; font-weight: 400; }
.hero__zh { font-size: 36px; line-height: 48px; font-weight: 300; letter-spacing: 3px; }
.crumbs { display: flex; align-items: center; gap: 9px; }
.crumbs__sep { width: 10px; height: 14px; }

/* Content card */
.main { padding: 113px 164px 132px 165px; }
.card { background: #fff; }
.head { border-bottom: 4px solid; border-image: linear-gradient(90deg, #00482e, #006b46 52%, #3f8c3c 72%, #8fb92f) 1; }
.head--info { display: flex; align-items: baseline; gap: 27px; padding: 100px 75px 40px; }
.head--form { padding: 96px 52px 44px; }
.head__title { font-size: 36px; line-height: 48px; font-weight: 400; letter-spacing: 3px; }
.head__en { font-family: "Liberation Sans", sans-serif; font-size: 20px; font-weight: 400; line-height: 24px; color: #006b46; }
.head__note { margin-top: 12px; font-size: 21px; line-height: 30px; }

.info { margin: 0 76px; }
.info__row {
  display: grid;
  grid-template-columns: 193px 1fr;
  padding-left: 11px;
  border-bottom: 1px solid;
  border-image: linear-gradient(90deg, #7fa396, #7fb5a2 50%, #c7dc97) 1;
}
.info__row dt { font-size: 21px; }
.info__row address { margin-top: 22px; color: #666; font-size: 19px; font-style: normal; line-height: 25px; }
.info__row--phone { padding-top: 61px; padding-bottom: 65px; }
.info__row--fax { padding-top: 32px; padding-bottom: 66px; }
.info__row--address { padding-top: 25px; padding-bottom: 49px; }
.info__row--factory { padding-top: 38px; padding-bottom: 97px; border: 0; }
.info__map { margin-left: 19px; color: #006b46; font: 400 20px/24px "Liberation Sans", sans-serif; }

/* Map */
.map { display: block; width: 100%; height: 482px; background: #edeff2; }
.map path, .map circle { vector-effect: non-scaling-stroke; }
.map__case { fill: none; stroke: #d9dce1; stroke-width: 4px; stroke-linejoin: round; }
.map__road { fill: none; stroke: #fff; stroke-width: 2px; stroke-linejoin: round; }
.map__main { fill: none; stroke: #fff; stroke-width: 7px; stroke-linejoin: round; filter: drop-shadow(0 0 1px #cfd3d9); }
.map__river { fill: none; stroke: #9cc0f9; stroke-linejoin: round; }
.map__stream { fill: none; stroke: #9cc0f9; stroke-width: 1px; }
.map__highway { stroke: #fde293; stroke-width: 14px; }
.map__trunk-case { stroke: #f9ab00; stroke-width: 7px; }
.map__trunk { stroke: #fde293; stroke-width: 4px; }
.map__trunk-case--wide { stroke-width: 11px; }
.map__trunk--wide { stroke-width: 8px; }
.map text { font-family: "Noto Sans CJK TC", sans-serif; }
.map__num { fill: #fff; font-size: 12px; font-weight: 500; text-anchor: middle; }
.map__exit { fill: #333; font-size: 11px; font-weight: 400; text-anchor: middle; }
.map__place { fill: #4a4d51; font-size: 18px; font-weight: 500; stroke: #fff; stroke-width: 2px; paint-order: stroke; }
.map__place--wide { font-size: 19px; }
.map__place--teal { fill: #0f8a96; }
.map__place--blue { fill: #1a73e8; }
.map__place--green { fill: #188038; }
.map__place--slate { fill: #546e7a; }
.map__place--orange { fill: #d56e0c; }
.map__street { fill: #444; font-size: 13px; font-weight: 400; text-anchor: middle; stroke: #fff; stroke-width: 2px; paint-order: stroke; }
.map__street--brown { fill: #7c3a00; font-size: 15px; }
.map__street--water { fill: #1e63c9; font-size: 15px; stroke: #9cc0f9; }

/* Form */
.form__body { padding: 44px 54px 85px 49px; }
.form__grid { display: grid; grid-template-columns: 1fr 1fr; gap: 25px 20px; }
.field { display: flex; flex-direction: column; gap: 6px; font-size: 26px; }
.field--message { gap: 19px; margin-top: 29px; }
.field__label { padding-left: 2px; }
.field__line { display: flex; align-items: center; }
.field__line .field__label { margin-right: 55px; }
.radio { display: flex; align-items: center; gap: 9px; margin-right: 11px; }
.radio input { appearance: none; width: 19px; height: 19px; margin: 0; border-radius: 50%; }
.radio input:checked { border: 4px solid #999; background: #006b46; }
.field__input { display: block; width: 100%; height: 68px; padding: 0 16px; border: 0; border-radius: 0; background: #f1f1f1; font: inherit; }
.field__input--area { height: 133px; padding: 16px; resize: none; }
.form__actions { display: flex; justify-content: center; margin-top: 71px; padding-left: 97px; }
.submit { width: 322px; height: 69px; border: 0; background: #006b46; color: #fff; font: inherit; font-size: 21px; }

/* Footer */
.footer {
  padding: 89px 171px 92px 167px;
  background: linear-gradient(97deg, #00442a 2%, #006b46 53%, #3f8c3c 77%, #6ba334 100%);
  color: #e6f0ea;
  font-size: 18px;
}
.footer__top { display: flex; justify-content: space-between; }
.footer__contact { display: flex; align-items: center; padding-top: 7px; }
.footer__contact span { line-height: 18px; }
.footer__contact span + span { margin-left: 12px; padding-left: 12px; border-left: 1px solid #a9c9ba; }
.footer__nav { display: flex; gap: 18px; padding-right: 7px; }
.footer__rule { display: block; width: 100%; height: 11px; margin-top: 12px; }
.footer__copy { margin-top: 8px; }
```
FILE: main.js
```js
// Scatters the fine particles over the hero banner.
(function () {
  var canvas = document.querySelector('.hero__dust');
  var w = canvas.clientWidth, h = canvas.clientHeight;
  canvas.width = w;
  canvas.height = h;
  var ctx = canvas.getContext('2d');
  var kx = w / 1921, seed = 7;

  function rnd() {
    seed = (seed * 1664525 + 1013904223) % 4294967296;
    return seed / 4294967296;
  }

  // Fills a polygon with dots; spread softens its outline.
  function scatter(points, count, color, radius, spread, weight) {
    var xs = points.map(function (p) { return p[0]; });
    var ys = points.map(function (p) { return p[1]; });
    var x0 = Math.min.apply(null, xs), x1 = Math.max.apply(null, xs);
    var y0 = Math.min.apply(null, ys), y1 = Math.max.apply(null, ys);
    var shape = new Path2D();
    points.forEach(function (p, i) { shape[i ? 'lineTo' : 'moveTo'](p[0], p[1]); });
    shape.closePath();
    ctx.fillStyle = color;
    var n = 0, tries = 0;
    while (n < count && tries < count * 20) {
      tries++;
      var x = x0 + (x1 - x0) * rnd(), y = y0 + (y1 - y0) * rnd();
      if (weight && rnd() > weight(x, y)) continue;
      if (!ctx.isPointInPath(shape, x, y)) continue;
      x += (rnd() + rnd() - 1) * spread;
      y += (rnd() + rnd() - 1) * spread;
      ctx.beginPath();
      ctx.arc(x * kx, y, radius, 0, 7);
      ctx.fill();
      n++;
    }
  }

  scatter([[190, 60], [340, 50], [500, 30], [620, 90], [560, 160], [420, 260], [240, 260], [140, 200], [160, 110]], 480, 'rgba(90,160,125,.5)', 1.3, 50);
  scatter([[265, 60], [326, 54], [408, 52], [449, 38], [496, 22], [508, 38], [540, 64], [600, 84], [571, 104], [522, 96], [449, 90], [359, 98], [302, 100], [275, 79]], 2500, 'rgba(50,150,105,.5)', 1.2, 18);
  scatter([[200, 55], [330, 50], [330, 105], [240, 100]], 300, 'rgba(60,150,110,.5)', 1.2, 30);
  scatter([[540, 68], [600, 84], [571, 104], [545, 105]], 500, 'rgba(100,165,125,.5)', 1.2, 14);
  scatter([[180, 110], [480, 105], [440, 170], [200, 180]], 480, 'rgba(60,150,110,.5)', 1.2, 40);
  scatter([[570, 125], [620, 105], [700, 135], [780, 160], [850, 185], [960, 210], [1060, 220], [1180, 210], [1180, 290], [540, 290]], 6000, 'rgba(75,150,105,.36)', 1, 50);
  scatter([[650, 115], [715, 130], [780, 150], [740, 175], [660, 145]], 500, 'rgba(70,165,120,.42)', 1, 24);
  scatter([[800, 170], [860, 175], [910, 215], [890, 270], [760, 270]], 900, 'rgba(80,170,120,.4)', 1.1, 34);
  scatter([[560, 170], [590, 160], [590, 280], [520, 280]], 500, 'rgba(80,160,110,.4)', 1, 34);
  scatter([[480, 0], [1400, 0], [1400, 230], [1000, 200], [620, 90]], 800, 'rgba(140,200,155,.5)', 1.2, 20);
  scatter([[1000, 215], [1300, 200], [1500, 210], [1700, 205], [1700, 285], [1000, 285]], 2300, 'rgba(150,205,150,.42)', 1.1, 40);
  scatter([[1150, 0], [1921, 0], [1921, 269], [1150, 269]], 3200, 'rgba(190,215,160,.5)', 1.1, 0, function (x) { return (x - 1100) / 820; });
  scatter([[1480, 0], [1921, 0], [1921, 50]], 350, 'rgba(215,225,160,.5)', 1.1, 20);
  scatter([[1329, 100], [1380, 130], [1430, 165], [1490, 205], [1590, 269], [1490, 269], [1420, 200], [1370, 145]], 1700, 'rgba(150,205,145,.42)', 1.1, 5);
})();
```
